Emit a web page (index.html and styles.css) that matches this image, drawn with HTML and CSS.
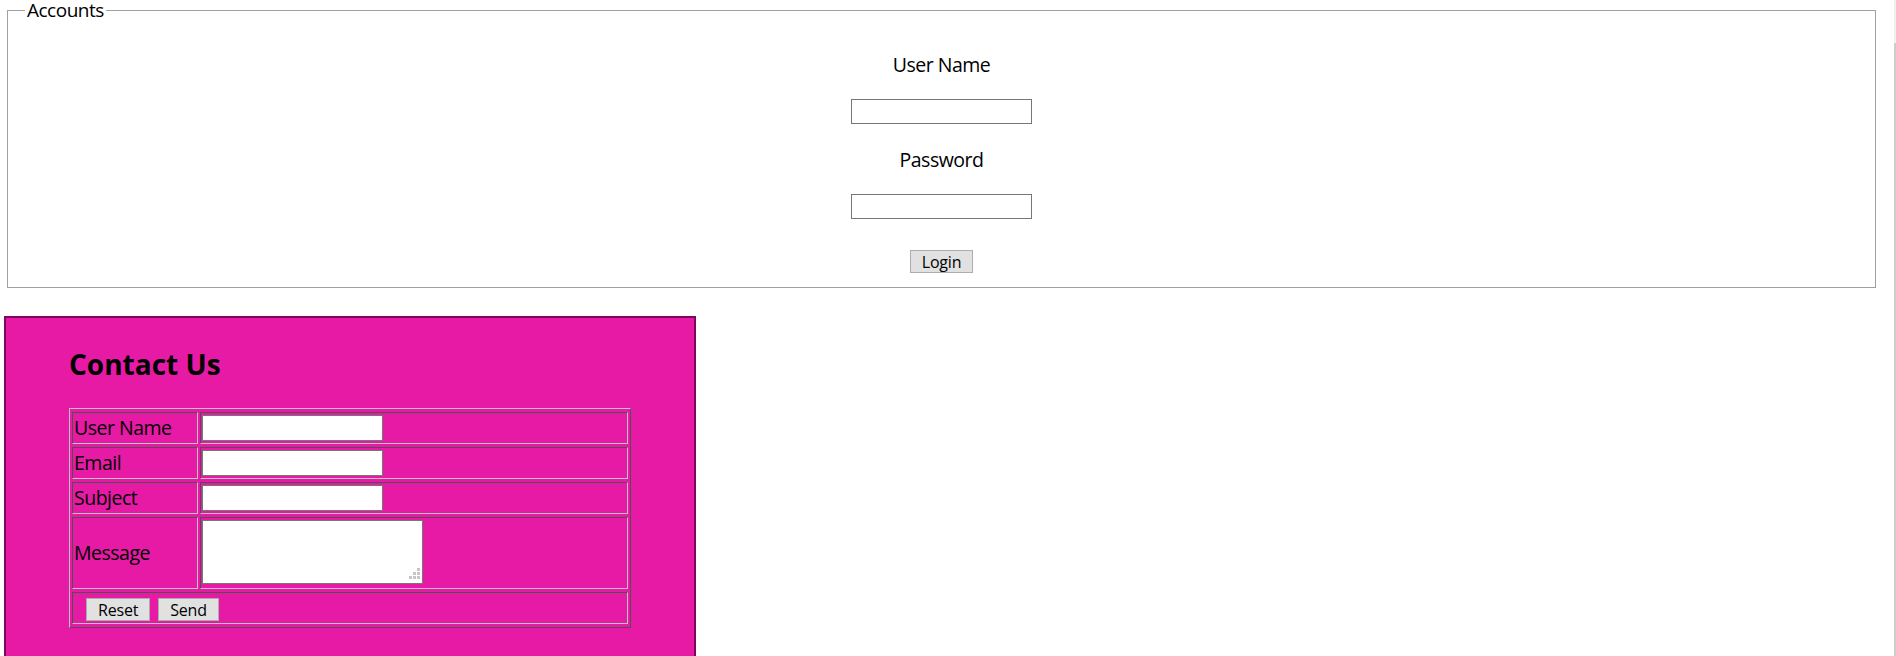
FILE: index.html
```html
<!DOCTYPE html>
<html>
<head>
<meta charset="utf-8">
<title>Accounts</title>
<link rel="stylesheet" href="styles.css">
</head>
<body>
<fieldset class="accounts">
  <legend class="accounts-legend">Accounts</legend>
  <p class="acc-label">User Name</p>
  <input class="acc-input" type="text">
  <p class="acc-label">Password</p>
  <input class="acc-input" type="password">
  <button class="btn btn-login" type="button">Login</button>
</fieldset>

<div class="contact">
  <h2 class="contact-title">Contact Us</h2>
  <table class="contact-table">
    <tr><td class="lbl">User Name</td><td class="fld"><input class="c-input" type="text"></td></tr>
    <tr><td class="lbl">Email</td><td class="fld"><input class="c-input" type="text"></td></tr>
    <tr><td class="lbl">Subject</td><td class="fld"><input class="c-input" type="text"></td></tr>
    <tr><td class="lbl">Message</td><td class="fld"><span class="ta-wrap"><textarea class="c-text"></textarea></span></td></tr>
    <tr><td class="actions" colspan="2"><button class="btn btn-reset" type="reset">Reset</button><button class="btn btn-send" type="button">Send</button></td></tr>
  </table>
</div>

<div class="scrollbar"></div>
</body>
</html>
```

FILE: styles.css
```css
html, body {
  margin: 0;
  padding: 0;
  overflow: hidden;
  background: #fff;
}

body {
  font-family: "Open Sans", "Noto Sans", sans-serif;
  font-size: 19.5px;
  letter-spacing: -0.5px;
  color: #000;
}

/* ---------- Accounts fieldset ---------- */
.accounts {
  margin: 0 20px 0 7px;
  padding: 0 0 14px;
  border: 1px solid #a0a0a0;
  min-width: 0;
}

.accounts-legend {
  margin-left: 17px;
  padding: 0 2px;
  font-size: 19px;
  line-height: 20px;
}

.acc-label {
  margin: 0 0 21px;
  line-height: 27px;
  text-align: center;
}

.acc-label:first-of-type {
  margin-top: 31px;
}

.acc-input {
  display: block;
  box-sizing: border-box;
  width: 181px;
  height: 25px;
  margin: 0 auto 22px;
  border: 1px solid #767676;
  background: #fff;
  padding: 0 2px;
}

.acc-input[type="password"] {
  margin-bottom: 31px;
}

.btn {
  box-sizing: border-box;
  height: 23px;
  padding: 0 11px;
  border: 1px solid #adadad;
  background: #e1e1e1;
  font-family: "Open Sans", "Noto Sans", sans-serif;
  font-size: 16px;
  letter-spacing: -0.2px;
  line-height: 20px;
  color: #000;
  border-radius: 0;
}

.btn-login {
  display: block;
  margin: 0 auto;
}

/* ---------- Contact box ---------- */
.contact {
  margin: 28px 0 0 4px;
  width: 625px;
  padding: 0 0 60px 63px;
  background: #e61aa5;
  border: 2px solid #80055f;
}

.contact-title {
  margin: 27px 0 25px;
  font-size: 28px;
  letter-spacing: 0;
  line-height: 38px;
  font-weight: 700;
}

.contact-table {
  width: 562px;
  border-collapse: separate;
  border-spacing: 2px 3px;
  border: 1px solid;
  border-color: #c4c4c4 #505050 #505050 #c4c4c4;
  font-size: 19.5px;
  line-height: 28px;
}

.contact-table td {
  border: 1px solid;
  border-color: #505050 #c4c4c4 #c4c4c4 #505050;
  padding: 1px;
  vertical-align: middle;
}

.contact-table .lbl {
  width: 122px;
}

.c-input {
  display: block;
  box-sizing: border-box;
  width: 181px;
  height: 26px;
  margin: 1px 0;
  border: 1px solid #767676;
  background: #fff;
}

.ta-wrap {
  position: relative;
  display: block;
  width: 221px;
}

.c-text {
  display: block;
  box-sizing: border-box;
  width: 221px;
  height: 64px;
  margin: 1px 0 3px;
  border: 1px solid #767676;
  background: #fff;
  resize: none;
}

.ta-wrap::after {
  content: "";
  position: absolute;
  right: 3px;
  bottom: 5px;
  width: 3px;
  height: 3px;
  background: #c6c6c6;
  box-shadow: -4px 0 #c6c6c6, -8px 0 #c6c6c6, 0 -4px #c6c6c6, -4px -4px #c6c6c6, 0 -8px #c6c6c6;
}

.actions .btn {
  vertical-align: middle;
}

.btn-reset {
  margin-left: 12px;
}

.btn-send {
  margin-left: 8px;
}

/* sliver of the window scrollbar at the right edge */
.scrollbar {
  position: fixed;
  top: 0;
  right: 0;
  width: 2px;
  height: 100%;
  background: #cdcdcd;
  border-top: 43px solid #f0f0f0;
}
```
